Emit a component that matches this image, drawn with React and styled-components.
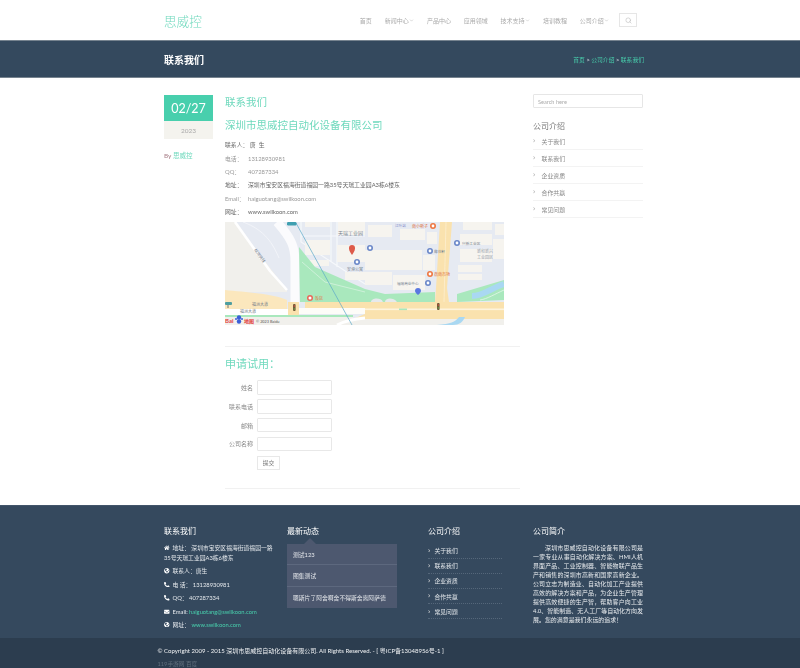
import React from "react";
import styled, { createGlobalStyle } from "styled-components";
import { FaHome, FaPhoneAlt, FaEnvelope, FaGlobeAmericas, FaChevronRight } from "react-icons/fa";
import { FiSearch, FiChevronDown } from "react-icons/fi";

const FONT = `Lato, "Noto Sans CJK SC", sans-serif`;
const GREEN = "#48cfad";
const SOFT_GREEN = "#6fd9bd";

const Global = createGlobalStyle`
  html, body { margin: 0; padding: 0; background: #fff; }
  body { font-family: ${FONT}; height: 668px; overflow: hidden; }
  * { box-sizing: border-box; }
`;

const Page = styled.div`
  filter: blur(0.3px);
`;
const Container = styled.div`
  width: 480px;
  margin-left: 164px;
`;
const Header = styled.header`
  height: 40px;
`;
const HeaderInner = styled(Container)`
  display: flex;
  align-items: center;
  justify-content: space-between;
  height: 40px;
`;
const Logo = styled.div`
  font-size: 12.6px;
  font-weight: 300;
  color: ${SOFT_GREEN};
`;
const Nav = styled.nav`
  display: flex;
  align-items: center;
  gap: 12.8px;
  padding-right: 7px;
`;
const NavItem = styled.span`
  display: inline-flex;
  align-items: center;
  font-size: 6px;
  color: #aaa;
  svg { width: 5px; height: 5px; margin-left: 0.5px; }
`;
const SearchBtn = styled.span`
  width: 18px;
  height: 14px;
  margin-left: -3px;
  border: 1px solid #e6e6e6;
  display: flex;
  align-items: center;
  justify-content: center;
  color: #bbb;
  svg { width: 7px; height: 7px; }
`;
const Banner = styled.div`
  height: 38px;
  background: #34495e;
  border-top: 1px solid #76838f;
  border-bottom: 1px solid #76838f;
`;
const BannerInner = styled(Container)`
  height: 36px;
  display: flex;
  align-items: center;
  justify-content: space-between;
`;
const BannerTitle = styled.h1`
  margin: 0;
  font-size: 10px;
  font-weight: 700;
  color: #fff;
`;
const Crumbs = styled.div`
  font-size: 5.8px;
  color: #dfe5ea;
  span { color: ${GREEN}; }
`;
const Body = styled(Container)`
  display: flex;
  padding-top: 17px;
  height: 427px;
`;
const DateCol = styled.div`
  width: 49px;
  margin-right: 12px;
  flex: none;
`;
const DateTop = styled.div`
  height: 26px;
  background: ${GREEN};
  color: #fff;
  font-size: 12.5px;
  display: flex;
  align-items: center;
  justify-content: center;
`;
const DateYear = styled.div`
  height: 18px;
  background: #f4f3ee;
  color: #aaa;
  font-size: 6.5px;
  display: flex;
  align-items: center;
  justify-content: center;
`;
const By = styled.div`
  margin-top: 11px;
  font-size: 6.5px;
  color: #a87f88;
  span { color: ${SOFT_GREEN}; }
`;
const MainCol = styled.main`
  width: 295px;
  margin-right: 13px;
  flex: none;
`;
const Title = styled.h2`
  margin: 0;
  font-size: 10.5px;
  line-height: 15px;
  font-weight: 400;
  color: ${SOFT_GREEN};
`;
const SubTitle = styled(Title)`
  margin-top: 8px;
  margin-bottom: 5px;
`;
const InfoRow = styled.div`
  display: flex;
  height: 13.4px;
  align-items: center;
  font-size: 5.85px;
  color: ${p => (p.$dark ? "#666" : "#999")};
`;
const InfoLabel = styled.span`
  width: 23px;
  flex: none;
`;
const MapBox = styled.svg`
  display: block;
  width: 279px;
  height: 103px;
  margin-top: 4px;
`;
const Rule = styled.hr`
  margin: ${p => p.$m || "21px 0 0"};
  border: 0;
  border-top: 1px solid #f1f1f1;
`;
const ApplyTitle = styled.h3`
  margin: 9px 0 9px;
  font-size: 11px;
  line-height: 15px;
  font-weight: 400;
  color: ${SOFT_GREEN};
`;
const FormRow = styled.div`
  display: flex;
  align-items: center;
  gap: 4px;
  margin-bottom: 4.3px;
`;
const FormLabel = styled.label`
  width: 28px;
  text-align: right;
  font-size: 6px;
  color: #888;
  white-space: nowrap;
`;
const FormInput = styled.div`
  width: 74.5px;
  height: 14.5px;
  border: 1px solid #e8e8e8;
  border-radius: 1px;
  background: #fff;
`;
const Submit = styled.div`
  margin: 1px 0 0 32px;
  width: 23px;
  height: 14px;
  border: 1px solid #e8e8e8;
  font-size: 5.8px;
  color: #777;
  display: flex;
  align-items: center;
  justify-content: center;
`;
const Side = styled.aside`
  width: 110px;
  flex: none;
  margin-top: -1px;
`;
const SearchBox = styled.div`
  height: 14px;
  border: 1px solid #e6e6e6;
  border-radius: 1px;
  padding-left: 4px;
  font-size: 5.6px;
  color: #aaa;
  display: flex;
  align-items: center;
`;
const SideTitle = styled.h4`
  margin: 13px 0 2px;
  font-size: 8px;
  line-height: 10px;
  font-weight: 400;
  color: #777;
`;
const SideItem = styled.div`
  height: 17px;
  display: flex;
  align-items: center;
  gap: 6px;
  font-size: 5.9px;
  color: #888;
  border-bottom: 1px solid #f3f3f3;
  svg { width: 2.5px; height: 3.5px; color: #aaa; }
`;
const Footer = styled.footer`
  height: 133px;
  background: #35495e;
  border-top: 1px solid #42556a;
  padding-top: 20px;
`;
const FooterInner = styled(Container)`
  display: flex;
`;
const FootCol = styled.div`
  width: ${p => p.$w}px;
  flex: none;
`;
const FootTitle = styled.h5`
  margin: 0;
  font-size: 8px;
  line-height: 11px;
  font-weight: 400;
  color: #fff;
`;
const ContactList = styled.div`
  margin-top: 6px;
  width: 113px;
  font-size: 5.8px;
  color: #e4e8ec;
`;
const ContactRow = styled.div`
  line-height: 10px;
  margin-bottom: 3.4px;
  a { color: ${GREEN}; }
  svg { width: 5.5px; height: 5.5px; color: #fff; margin-right: 3px; vertical-align: -0.5px; }
`;
const NewsPanel = styled.div`
  position: relative;
  margin-top: 7px;
  width: 110px;
  background: #4d586f;
  font-size: 5.8px;
  color: #e6e8ec;
  &::before {
    content: "";
    position: absolute;
    left: 17px;
    top: -6px;
    border-left: 6px solid transparent;
    border-right: 6px solid transparent;
    border-bottom: 6px solid #4d586f;
  }
`;
const NewsItem = styled.div`
  height: 21.3px;
  padding-left: 6px;
  display: flex;
  align-items: center;
  border-bottom: 1px solid #5d687e;
  &:last-child { border-bottom: 0; }
`;
const LinkList = styled.div`
  margin-top: 6.5px;
  width: 74px;
`;
const FootLink = styled.div`
  height: 15.2px;
  display: flex;
  align-items: center;
  gap: 4px;
  font-size: 5.8px;
  color: #e4e8ec;
  border-bottom: 1px dotted #55677a;
  svg { width: 2.5px; height: 3.5px; color: #ddd; }
`;
const AboutText = styled.p`
  margin: 5.5px 0 0;
  font-size: 5.95px;
  line-height: 9.1px;
  color: #e8ebee;
  text-align: justify;
  text-indent: 12px;
`;
const BottomBar = styled.div`
  height: 30px;
  background: #2c3d4f;
  padding: 9px 0 0 157.5px;
`;
const Copy = styled.div`
  font-size: 6px;
  line-height: 7px;
  color: #f0f2f4;
  white-space: nowrap;
`;
const Stats = styled.div`
  margin-top: 6px;
  font-size: 5.7px;
  line-height: 7px;
  color: #5f6d7c;
`;

const MapSvg = () => {
  const blocks = [
    [80,0,25,5],[113,0,27,13],[80,18,25,15],[112,23,28,17],[84,38,20,6],[120,50,20,8],
    [143,3,24,12],[175,7,25,11],[202,10,10,12],[140,28,57,20],[198,33,12,15],
    [140,50,27,13],[168,53,32,15],[238,0,29,8],[270,2,9,11],[235,12,32,11],
    [235,27,32,13],[233,43,24,7],[233,52,24,6],[268,17,11,20],
  ];
  const blue = [[145,26],[132,40],[205,29],[232,21],[203,61]];
  const orange = [[208,4],[205,52]];
  const labels = [
    [113,12.5,"天瑞工业园",5,"#7b8694"],[122,48.5,"安港公寓",4,"#7b8694"],[209,30.5,"椰花轩",3.7,"#7b8694"],
    [237,22.5,"兴新工业区",3.7,"#7b8694"],[252,31,"新和新兴",4,"#9aa3ad"],[252,37,"工业园区",4,"#9aa3ad"],
    [172,62.5,"福瑞商业中心",3.6,"#7b8694"],[187,6,"南小斯子",4,"#e07040"],[209,53.5,"荔南市场",4,"#e07040"],
    [170,5,"江叶站",3.6,"#7f88c8"],[90,77.5,"饭店",4,"#e07040"],[27,84,"福洲大道",4,"#77808a"],[15,91,"福洲大道",4,"#77808a"],
  ];
  return (
    <MapBox viewBox="0 0 279 103">
      <rect width="279" height="103" fill="#e6eaf2" />
      <path d="M0 0H10L62 68V70H0Z" fill="#f1f0ec" />
      <path d="M10 0L45 49L62 68" stroke="#fff" strokeWidth="2.6" fill="none" />
      <path d="M18 0C40 8 48 22 54 36" stroke="#f5f6fa" strokeWidth="0.8" fill="none" />
      <path d="M52 0C66 16 70 24 70 40V82" stroke="#fbfbfd" strokeWidth="9" fill="none" />
      <path d="M76 0V20L140 62M112 0V45M106 0V40M76 14H140M0 0" stroke="#f6f8fb" strokeWidth="1.2" fill="none" />
      {blocks.map(([x,y,w,h],i)=><rect key={i} x={x} y={y} width={w} height={h} fill="#f6f4ef" />)}
      <path d="M74 25L90 45L140 67L160 72L210 70V80H75Z" fill="#a9e8bd" />
      <path d="M77 40L100 60L140 70" stroke="#d6f3df" strokeWidth="0.8" fill="none" />
      <path d="M160 80C160 76 168 75 172 80ZM146 80C146 76 156 75 158 80Z" fill="#e6e9ec" />
      <path d="M232 80V72L279 58V78Z" fill="#a9e8bd" />
      <path d="M247 74C258 74 266 66 279 62" stroke="#a9d8f2" strokeWidth="6" fill="none" />
      <path d="M255 78C262 77 270 72 279 68" stroke="#e4f6ea" strokeWidth="0.8" fill="none" />
      <path d="M0 68C20 70 50 72 62 78V87H0Z" fill="#fbe7bd" />
      <path d="M215 0H227L222 66L224 80H279V97H128L140 92V86H80V80H210L211 66Z" fill="#fae2ae" />
      <path d="M221 0L219 80" stroke="#fdf3dc" strokeWidth="0.6" fill="none" />
      <rect x="0" y="87" width="63" height="6" fill="#fff" />
      <rect x="63" y="80" width="11" height="14" fill="#fae2ae" />
      <rect x="74" y="86" width="66" height="6" fill="#fdfcf8" />
      <rect x="140" y="86.5" width="139" height="1.6" fill="#fdf3dc" />
      <rect x="174" y="86.5" width="8" height="1.6" fill="#a9e8bd" />
      <rect x="0" y="93" width="128" height="2" fill="#a9e8bd" />
      <rect x="0" y="95" width="128" height="8" fill="#f1f0ec" />
      <rect x="128" y="97" width="151" height="6" fill="#f1f0ec" />
      <path d="M112 103C120 99 128 97 140 96" stroke="#fff" strokeWidth="3" fill="none" />
      <path d="M212 103C226 102 230 100 234 95H240C238 100 234 103 228 103Z" fill="#a9d8f2" />
      <path d="M71 1L127 103" stroke="#5aa8c8" strokeWidth="0.7" fill="none" />
      <rect x="62" y="0" width="9.5" height="3.5" rx="1.2" fill="#3f9fb0" />
      {labels.map(([x,y,t,s,c],i)=><text key={i} x={x} y={y} fontSize={s} fill={c} fontFamily={FONT}>{t}</text>)}
      <text transform="translate(29 28) rotate(55)" fontSize="4" fill="#6b7480" fontFamily={FONT}>松岗快线</text>
      <path d="M127 33C124 29 124 27 124 26A3 3 0 0 1 130 26C130 27 130 29 127 33Z" fill="#dd5a4a" />
      {blue.map(([x,y],i)=><g key={i}><circle cx={x} cy={y} r="3" fill="#6a87c8"/><circle cx={x} cy={y} r="1.4" fill="#fff"/></g>)}
      <path d="M193 66a3 3 0 0 1 3 3c0 1.5-2 3-3 4c-1-1-3-2.5-3-4a3 3 0 0 1 3-3Z" fill="#5a78e0"/>
      {orange.map(([x,y],i)=><g key={i}><circle cx={x} cy={y} r="3" fill="#ee7742"/><circle cx={x} cy={y} r="1.4" fill="#fff"/></g>)}
      <circle cx="85" cy="76" r="3" fill="#e8685a"/><circle cx="85" cy="76" r="1.5" fill="#fff"/>
      <rect x="68" y="82" width="2.6" height="7" rx="1" fill="#6f5a3a"/><circle cx="69.3" cy="84" r="0.7" fill="#e04a3a"/><circle cx="69.3" cy="87" r="0.7" fill="#5fb04a"/>
      <rect x="212" y="81" width="2.6" height="7" rx="1" fill="#6f5a3a"/><circle cx="213.3" cy="83" r="0.7" fill="#e04a3a"/><circle cx="213.3" cy="86" r="0.7" fill="#5fb04a"/>
      <rect x="0" y="80" width="7" height="3" rx="1" fill="#4e9ea0"/><rect x="2.5" y="83" width="1" height="3" fill="#777"/>
      <text x="0" y="101" fontSize="6" fontWeight="700" fill="#e2413a" fontFamily={FONT}>Bai</text>
      <circle cx="14" cy="95.5" r="2.2" fill="#3a5fd8"/><circle cx="14" cy="99.5" r="2.2" fill="#3a5fd8"/><circle cx="11" cy="97" r="1" fill="#3a5fd8"/><circle cx="17" cy="97" r="1" fill="#3a5fd8"/>
      <text x="19" y="101" fontSize="5" fontWeight="700" fill="#e2413a" fontFamily={FONT}>地图</text>
      <text x="31" y="100.5" fontSize="3.8" fill="#555" fontFamily={FONT}>© 2023 Baidu</text>
    </MapBox>
  );
};

const nav = [["首页"],["新闻中心",1],["产品中心"],["应用领域"],["技术支持",1],["培训教程"],["公司介绍",1]];
const links = ["关于我们","联系我们","企业资质","合作共赢","常见问题"];

export default function App() {
  return (
    <Page>
      <Global />
      <Header>
        <HeaderInner>
          <Logo>思威控</Logo>
          <Nav>
            {nav.map(([t,d]) => <NavItem key={t}>{t}{d && <FiChevronDown />}</NavItem>)}
            <SearchBtn><FiSearch /></SearchBtn>
          </Nav>
        </HeaderInner>
      </Header>
      <Banner>
        <BannerInner>
          <BannerTitle>联系我们</BannerTitle>
          <Crumbs><span>首页</span> &gt; <span>公司介绍</span> &gt; <span>联系我们</span></Crumbs>
        </BannerInner>
      </Banner>
      <Body>
        <DateCol>
          <DateTop>02/27</DateTop>
          <DateYear>2023</DateYear>
          <By>By <span>思威控</span></By>
        </DateCol>
        <MainCol>
          <Title>联系我们</Title>
          <SubTitle>深圳市思威控自动化设备有限公司</SubTitle>
          <InfoRow $dark>联系人：&nbsp;唐&nbsp;&nbsp;生</InfoRow>
          <InfoRow><InfoLabel>电话：</InfoLabel>13128930981</InfoRow>
          <InfoRow><InfoLabel>QQ：</InfoLabel>407287334</InfoRow>
          <InfoRow $dark><InfoLabel>地址：</InfoLabel>深圳市宝安区福海街道福园一路35号天瑞工业园A3栋6楼东</InfoRow>
          <InfoRow><InfoLabel>Email：</InfoLabel>haiguotang@swilkoon.com</InfoRow>
          <InfoRow $dark><InfoLabel>网址：</InfoLabel>www.swilkoon.com</InfoRow>
          <MapSvg />
          <Rule />
          <ApplyTitle>申请试用：</ApplyTitle>
          {["姓名","联系电话","邮箱","公司名称"].map(l => (
            <FormRow key={l}><FormLabel>{l}</FormLabel><FormInput /></FormRow>
          ))}
          <Submit>提交</Submit>
          <Rule $m="18px 0 0" />
        </MainCol>
        <Side>
          <SearchBox>Search here</SearchBox>
          <SideTitle>公司介绍</SideTitle>
          {links.map(l => <SideItem key={l}><FaChevronRight />{l}</SideItem>)}
        </Side>
      </Body>
      <Footer>
        <FooterInner>
          <FootCol $w={123}>
            <FootTitle>联系我们</FootTitle>
            <ContactList>
              <ContactRow><FaHome />地址：&nbsp;深圳市宝安区福海街道福园一路35号天瑞工业园A3栋6楼东</ContactRow>
              <ContactRow><FaGlobeAmericas />联系人：唐生</ContactRow>
              <ContactRow><FaPhoneAlt />电 话：&nbsp;13128930981</ContactRow>
              <ContactRow><FaPhoneAlt />QQ：&nbsp;407287334</ContactRow>
              <ContactRow><FaEnvelope />Email: <a>haiguotang@swilkoon.com</a></ContactRow>
              <ContactRow><FaGlobeAmericas />网址：&nbsp;<a>www.swilkoon.com</a></ContactRow>
            </ContactList>
          </FootCol>
          <FootCol $w={141}>
            <FootTitle>最新动态</FootTitle>
            <NewsPanel>
              <NewsItem>测试123</NewsItem>
              <NewsItem>图集测试</NewsItem>
              <NewsItem>嗯斯片了阿舍啊舍不得斯舍离阿萨德</NewsItem>
            </NewsPanel>
          </FootCol>
          <FootCol $w={105}>
            <FootTitle>公司介绍</FootTitle>
            <LinkList>
              {links.map(l => <FootLink key={l}><FaChevronRight />{l}</FootLink>)}
            </LinkList>
          </FootCol>
          <FootCol $w={110}>
            <FootTitle>公司简介</FootTitle>
            <AboutText>深圳市思威控自动化设备有限公司是一家专业从事自动化解决方案、HMI人机界面产品、工业控制器、智能物联产品生产和销售的深圳市高新和国家高新企业。公司立志为制造业、自动化加工产业提供高效的解决方案和产品，为企业生产管理提供高效便捷的生产智，帮助客户向工业4.0、智能制造、无人工厂等自动化方向发展。您的满意是我们永远的追求！</AboutText>
          </FootCol>
        </FooterInner>
      </Footer>
      <BottomBar>
        <Copy>© Copyright 2009 - 2015 深圳市思威控自动化设备有限公司. All Rights Reserved. - [ 粤ICP备13048956号-1 ]</Copy>
        <Stats>119手游网 百度</Stats>
      </BottomBar>
    </Page>
  );
}
